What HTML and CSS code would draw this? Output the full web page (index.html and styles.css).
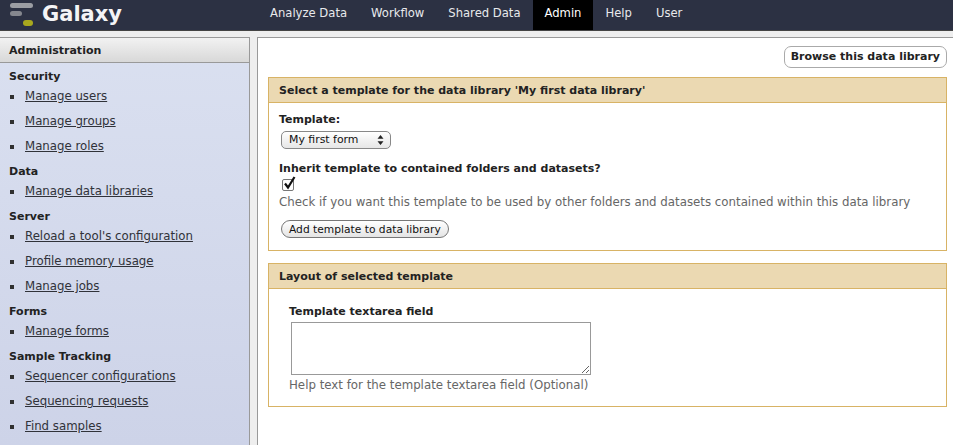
FILE: index.html
```html
<!DOCTYPE html>
<html lang="en">
<head>
    <meta charset="UTF-8">
    <title>Galaxy - Admin</title>
    <link rel="stylesheet" href="styles.css">
</head>
<body>
    <div class="masthead">
        <a class="brand" href="#">
            <svg class="logo" width="26" height="26" viewBox="0 0 26 26">
                <rect x="1" y="1" width="23" height="5" rx="2.5" fill="#9b9da3"/>
                <rect x="1" y="9" width="12" height="5" rx="2.5" fill="#85878e"/>
                <rect x="14" y="18" width="10" height="6" rx="3" fill="#a9a81e"/>
            </svg>
            <span class="brand-name">Galaxy</span>
        </a>
        <nav class="tabs">
            <a href="#">Analyze Data</a>
            <a href="#">Workflow</a>
            <a href="#">Shared Data</a>
            <a href="#" class="active">Admin</a>
            <a href="#">Help</a>
            <a href="#">User</a>
        </nav>
    </div>

    <div class="panels">
        <aside class="sidebar">
            <div class="sidebar-header">Administration</div>
            <div class="sidebar-body">
                <div class="section-title">Security</div>
                <ul>
                    <li><a href="#">Manage users</a></li>
                    <li><a href="#">Manage groups</a></li>
                    <li><a href="#">Manage roles</a></li>
                </ul>
                <div class="section-title">Data</div>
                <ul>
                    <li><a href="#">Manage data libraries</a></li>
                </ul>
                <div class="section-title">Server</div>
                <ul>
                    <li><a href="#">Reload a tool's configuration</a></li>
                    <li><a href="#">Profile memory usage</a></li>
                    <li><a href="#">Manage jobs</a></li>
                </ul>
                <div class="section-title">Forms</div>
                <ul>
                    <li><a href="#">Manage forms</a></li>
                </ul>
                <div class="section-title">Sample Tracking</div>
                <ul>
                    <li><a href="#">Sequencer configurations</a></li>
                    <li><a href="#">Sequencing requests</a></li>
                    <li><a href="#">Find samples</a></li>
                </ul>
            </div>
        </aside>

        <main class="content">
            <div class="action-row">
                <a href="#" class="action-button">Browse this data library</a>
            </div>

            <div class="form-box">
                <div class="form-title">Select a template for the data library 'My first data library'</div>
                <div class="form-body">
                    <label class="field-label">Template:</label>
                    <div class="select-box">
                        <span>My first form</span>
                        <svg class="select-arrows" width="7" height="12" viewBox="0 0 7 12">
                            <path d="M3.5 1 L6.5 4.8 H0.5 Z M3.5 11 L6.5 7.2 H0.5 Z" fill="#222"/>
                        </svg>
                    </div>
                    <label class="field-label inherit-label">Inherit template to contained folders and datasets?</label>
                    <div class="check-box">
                        <svg width="14" height="15" viewBox="0 0 14 15">
                            <path d="M3 7.5 L6 11.5 L12.5 1" fill="none" stroke="#111" stroke-width="2.2"/>
                        </svg>
                    </div>
                    <div class="help-text">Check if you want this template to be used by other folders and datasets contained within this data library</div>
                    <button type="button" class="submit-button">Add template to data library</button>
                </div>
            </div>

            <div class="form-box layout-box">
                <div class="form-title">Layout of selected template</div>
                <div class="form-body indented">
                    <label class="field-label">Template textarea field</label>
                    <textarea class="template-area"></textarea>
                    <div class="help-text">Help text for the template textarea field (Optional)</div>
                </div>
            </div>
        </main>
    </div>
</body>
</html>
```

FILE: styles.css
```css
html, body {
    height: 100%;
}
body {
    margin: 0;
    overflow: hidden;
    display: flex;
    flex-direction: column;
    font-family: "DejaVu Sans", Verdana, sans-serif;
    font-size: 11.8px;
    color: #303030;
    background: #eee;
}
a {
    color: #303239;
}

/* masthead */
.masthead {
    height: 30px;
    flex: none;
    display: flex;
    background: #2c3143;
    border-bottom: 1px solid #444;
}
.brand {
    width: 258px;
    flex: none;
    display: flex;
    align-items: flex-start;
    color: #fff;
    text-decoration: none;
}
.logo {
    margin: 2px 0 0 9px;
}
.brand-name {
    margin-left: 7px;
    font-size: 21px;
    line-height: 29px;
    font-weight: bold;
    color: #f4f4f6;
}
.tabs {
    display: flex;
}
.tabs a {
    padding: 0 12px;
    line-height: 27px;
    font-size: 11.6px;
    color: #e8e9ec;
    text-decoration: none;
}
.tabs a.active {
    background: #000;
    color: #fff;
}

/* panels */
.panels {
    flex: 1;
    min-height: 0;
    display: flex;
    padding-top: 6px;
    background: #eee;
}

.sidebar {
    width: 249px;
    flex: none;
    box-sizing: content-box;
    border-right: 1px solid #999;
    border-top: 1px solid #999;
    background: linear-gradient(#dae0f0, #cdd3e8);
}
.sidebar-header {
    height: 24px;
    padding-left: 9px;
    line-height: 25px;
    font-size: 11px;
    font-weight: bold;
    color: #222;
    background: linear-gradient(#f2f2f2, #d8d8d8);
    border-bottom: 1px solid #999;
}
.sidebar-body {
    padding: 6px 9px 0;
}
.section-title {
    line-height: 15px;
    font-size: 11px;
    font-weight: bold;
    color: #222;
}
.sidebar ul {
    margin: 0 0 5px;
    padding: 0;
    list-style: none;
}
.sidebar li {
    position: relative;
    height: 25px;
    padding-left: 16px;
    line-height: 25px;
    font-size: 11.75px;
}
.sidebar li::before {
    content: "";
    position: absolute;
    left: 1px;
    top: 11px;
    width: 4px;
    height: 4px;
    background: #303030;
}

.content {
    flex: 1;
    margin-left: 7px;
    padding: 8px 6px 0 10px;
    background: #fff;
    border-top: 1px solid #999;
    border-left: 1px solid #999;
}

/* action button */
.action-row {
    display: flex;
    justify-content: flex-end;
    height: 31px;
}
.action-button {
    height: 20px;
    padding: 0 6px;
    line-height: 20px;
    font-size: 11px;
    font-weight: bold;
    color: #222;
    text-decoration: none;
    background: #fff;
    border: 1px solid #aaa;
    border-radius: 7px;
}

/* form boxes */
.form-box {
    border: 1px solid #d8b365;
}
.layout-box {
    margin-top: 12px;
}
.form-title {
    height: 24px;
    padding-left: 10px;
    line-height: 25px;
    font-size: 11px;
    font-weight: bold;
    color: #222;
    background: #ebd9b2;
    border-bottom: 1px solid #d8b365;
}
.form-body {
    padding: 9px 10px 12px;
}
.form-body.indented {
    padding: 15px 20px 13px;
}
.field-label {
    display: block;
    line-height: 15px;
    font-size: 11px;
    font-weight: bold;
    color: #222;
}
.inherit-label {
    margin-top: 12px;
}
.select-box {
    position: relative;
    box-sizing: border-box;
    width: 110px;
    height: 18px;
    margin: 4px 0 0 2px;
    padding-left: 7px;
    line-height: 16px;
    font-size: 10.9px;
    color: #111;
    background: linear-gradient(#fff, #e6e6e6);
    border: 1px solid #888;
    border-radius: 5px;
}
.select-arrows {
    position: absolute;
    right: 6px;
    top: 2px;
}
.check-box {
    position: relative;
    box-sizing: border-box;
    width: 12px;
    height: 12px;
    margin: 3px 0 0 3px;
    background: #fff;
    border: 1px solid #777;
    border-radius: 2px;
}
.check-box svg {
    position: absolute;
    left: -1px;
    top: -4px;
}
.help-text {
    margin-top: 4px;
    line-height: 15px;
    color: #666;
}
.submit-button {
    display: block;
    height: 18px;
    margin: 10px 0 0 2px;
    padding: 0 7px;
    font-family: inherit;
    font-size: 10.7px;
    line-height: 15px;
    color: #111;
    background: linear-gradient(#fff, #e4e4e4);
    border: 1px solid #777;
    border-radius: 9px;
}
.template-area {
    display: block;
    box-sizing: border-box;
    width: 300px;
    height: 53px;
    margin: 3px 0 0 2px;
    background: #fff;
    border: 1px solid #999;
    border-radius: 0;
    outline: none;
}
.template-area + .help-text {
    margin-top: 3px;
}
```
